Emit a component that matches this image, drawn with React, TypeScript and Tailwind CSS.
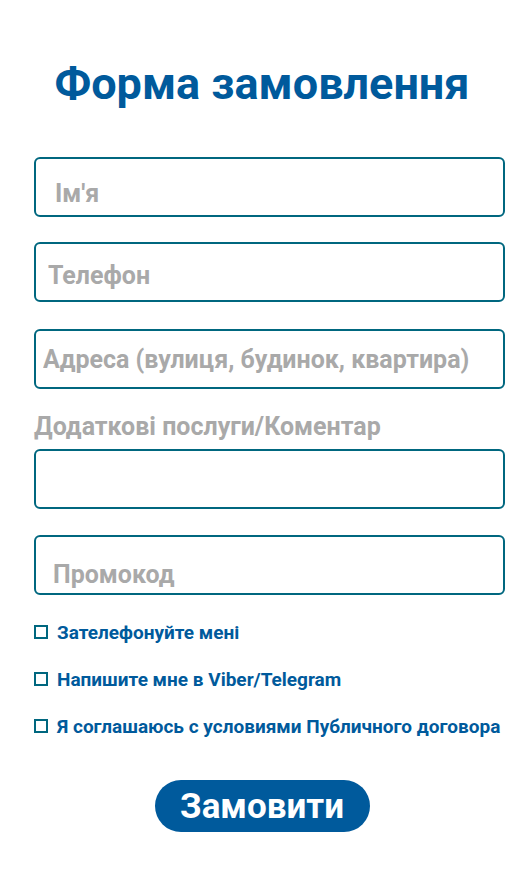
import { useState } from 'react';

const inputBase =
  'w-full h-[60px] rounded-[6px] border-2 border-[#00677f] bg-white text-[25px] font-bold text-[#555] placeholder:text-[#a9a9a9] outline-none';

function Check({ label }: { label: string }) {
  const [on, setOn] = useState(false);
  return (
    <label className="flex items-center gap-[9px] cursor-pointer h-[20px]">
      <span
        onClick={() => setOn(!on)}
        className={`w-[14px] h-[14px] shrink-0 border-2 border-[#00677f] ${on ? 'bg-[#00677f]' : 'bg-white'}`}
      />
      <span className="text-[19px] font-bold text-[#005a9c] leading-none whitespace-nowrap">{label}</span>
    </label>
  );
}

export default function App() {
  return (
    <div className="min-h-[891px] bg-white font-['Roboto',sans-serif]">
      <h1 className="pt-[54px] text-center text-[45px] font-bold text-[#005a9c] leading-[60px]">
        Форма замовлення
      </h1>

      <div className="flex flex-col pl-[34px] pr-[19px]">
        <div className="flex flex-col mt-[43px]">
          <input className={`${inputBase} pl-[19px] pt-[12px]`} placeholder="Ім'я" />
          <input className={`${inputBase} pl-[12px] pt-[6px] mt-[25px]`} placeholder="Телефон" />
          <input
            className={`${inputBase} pl-[7px] mt-[27px]`}
            placeholder="Адреса (вулиця, будинок, квартира)"
          />
          <div className="mt-[24px] text-[25px] font-bold text-[#a9a9a9] leading-[28px] whitespace-nowrap">
            Додаткові послуги/Коментар
          </div>
          <input className={`${inputBase} mt-[8px]`} />
          <input
            className={`${inputBase} w-[468px] pl-[17px] pt-[18px] mt-[26px]`}
            placeholder="Промокод"
          />
        </div>

        <div className="flex flex-col gap-[27px] mt-[27px]">
          <Check label="Зателефонуйте мені" />
          <Check label="Напишите мне в Viber/Telegram" />
          <Check label="Я соглашаюсь с условиями Публичного договора" />
        </div>
      </div>

      <div className="flex justify-center mt-[44px]">
        <button className="w-[215px] h-[52px] rounded-full bg-[#005a9c] text-white text-[35px] font-bold leading-none">
          Замовити
        </button>
      </div>
    </div>
  );
}
